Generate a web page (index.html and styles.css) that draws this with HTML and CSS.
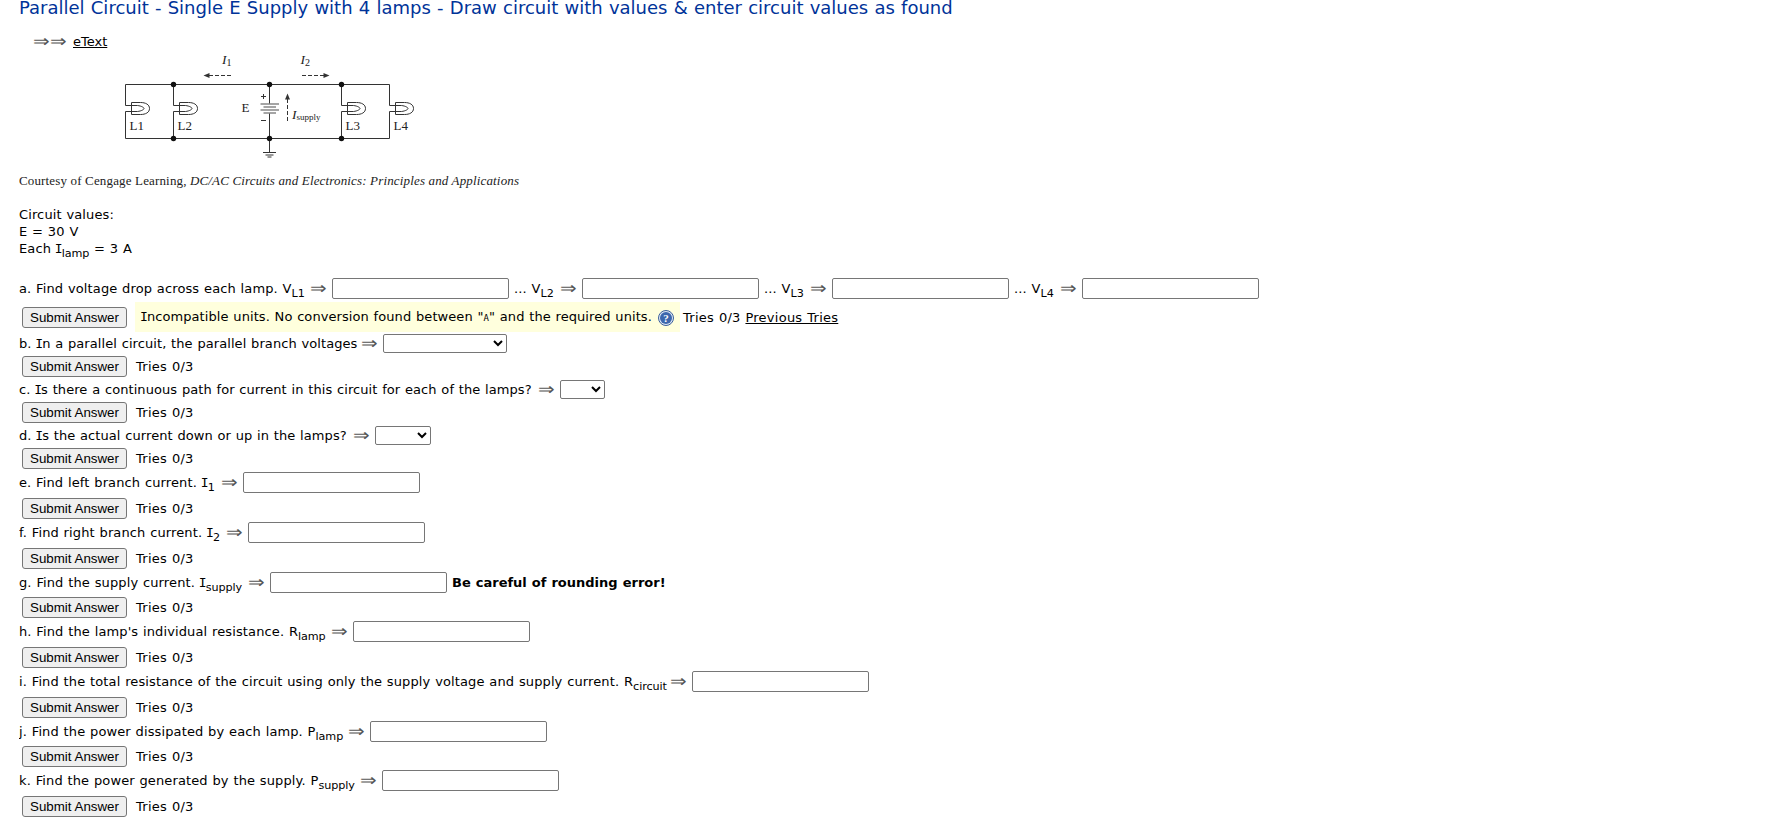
FILE: index.html
```
<!DOCTYPE html>
<html lang="en">
<head>
    <meta charset="UTF-8">
    <meta name="viewport" content="width=device-width, initial-scale=1.0">
    <title>Parallel Circuit</title>
    <link rel="stylesheet" href="styles.css">
</head>
<body>
    <h1>Parallel Circuit - Single E Supply with 4 lamps - Draw circuit with values &amp; enter circuit values as found</h1>
    <p class="etext"><span class="arrow">⇒</span><span class="arrow">⇒</span><a href="#">eText</a></p>

    <svg class="circuit" width="510" height="145" viewBox="19 50 510 145">
        <defs>
            <g id="lamp">
                <path d="M6 -6H15C20 -6 24 -4 24 0S20 6 15 6H6Z"/>
                <path d="M0 -3H12C16 -2.5 18.5 -1 18.5 0S16 2.5 12 3H0"/>
            </g>
        </defs>
        <g class="wire">
            <path d="M125.5 105.5V84.5H389.5V105.5M125.5 111.5V138.5H389.5V111.5"/>
            <path d="M173.5 84.5V105.5M173.5 111.5V138.5M341.5 84.5V105.5M341.5 111.5V138.5"/>
            <path d="M269.5 84.5V104M269.5 113V152.5M263 152.5H276M265.5 155H273.5M267.5 157H271.5"/>
            <use href="#lamp" x="125.5" y="108.5"/>
            <use href="#lamp" x="173.5" y="108.5"/>
            <use href="#lamp" x="341.5" y="108.5"/>
            <use href="#lamp" x="389.5" y="108.5"/>
            <path d="M261 96.5H266M263.5 94V99M261 120.5H266"/>
            <path stroke-dasharray="4 2" d="M231 75.5H209M302 75.5H324M287.5 121V99"/>
        </g>
        <path class="cell" d="M260.5 104H279M263.5 107H276M260.5 110H279M263.5 113H276"/>
        <path class="head" d="M203.5 75.5l6-2.5v5zM329.5 75.5l-6-2.5v5zM287.5 93.5l-2.5 6h5z"/>
        <g class="dot">
            <circle cx="173.5" cy="84.5" r="2.7"/>
            <circle cx="269.5" cy="84.5" r="2.7"/>
            <circle cx="341.5" cy="84.5" r="2.7"/>
            <circle cx="173.5" cy="138.5" r="2.7"/>
            <circle cx="269.5" cy="138.5" r="2.7"/>
            <circle cx="341.5" cy="138.5" r="2.7"/>
        </g>
        <g class="names">
            <text x="129.5" y="130">L1</text>
            <text x="177.5" y="130">L2</text>
            <text x="345.5" y="130">L3</text>
            <text x="393.5" y="130">L4</text>
            <text x="241.5" y="112">E</text>
            <text x="222" y="64"><tspan class="it">I</tspan><tspan class="small" dy="2">1</tspan></text>
            <text x="300.5" y="64"><tspan class="it">I</tspan><tspan class="small" dy="2">2</tspan></text>
            <text x="292" y="119"><tspan class="it">I</tspan><tspan class="tiny" dy="1">supply</tspan></text>
        </g>
        <text class="credit" x="19" y="185" textLength="500">Courtesy of Cengage Learning, <tspan class="it">DC/AC Circuits and Electronics: Principles and Applications</tspan></text>
    </svg>

    <div class="values">
        Circuit values:<br>
        E = 30 V<br>
        Each <span class="cap">I</span><sub>lamp</sub> = 3 A
    </div>

    <form id="circuitForm">
        <div class="question first">
            <label class="w-a"><span>a. Find voltage drop across each lamp. V<sub>L1</sub></span><span class="arrow">⇒</span></label>
            <input type="text">
            <label class="next"><span>... V<sub>L2</sub></span><span class="arrow">⇒</span></label>
            <input type="text">
            <label class="next"><span>... V<sub>L3</sub></span><span class="arrow">⇒</span></label>
            <input type="text">
            <label class="next"><span>... V<sub>L4</sub></span><span class="arrow">⇒</span></label>
            <input type="text">
        </div>
        <div class="answer first">
            <button type="button">Submit Answer</button>
            <div class="warning">
                <span class="message"><span class="cap">I</span>ncompatible units. No conversion found between "<span class="unit">A</span>" and the required units.</span>
                <svg class="help" width="16" height="16" viewBox="0 0 16 16">
                    <circle cx="8" cy="8" r="7.5" fill="#dfe8f5" stroke="#3b5f9b"/>
                    <circle cx="8" cy="8" r="6" fill="#3d67ad"/>
                    <text x="8" y="12" text-anchor="middle">?</text>
                </svg>
            </div>
            <span class="tries">Tries 0/3 <a href="#">Previous Tries</a></span>
        </div>

        <div class="question choice">
            <label class="w-b"><span>b. <span class="cap">I</span>n a parallel circuit, the parallel branch voltages</span><span class="arrow">⇒</span></label>
            <select class="wide"><option></option></select>
        </div>
        <div class="answer"><button type="button">Submit Answer</button><span class="tries">Tries 0/3</span></div>

        <div class="question choice">
            <label class="w-c"><span>c. <span class="cap">I</span>s there a continuous path for current in this circuit for each of the lamps?</span><span class="arrow">⇒</span></label>
            <select class="yesno"><option></option></select>
        </div>
        <div class="answer"><button type="button">Submit Answer</button><span class="tries">Tries 0/3</span></div>

        <div class="question choice">
            <label class="w-d"><span>d. <span class="cap">I</span>s the actual current down or up in the lamps?</span><span class="arrow">⇒</span></label>
            <select class="updown"><option></option></select>
        </div>
        <div class="answer"><button type="button">Submit Answer</button><span class="tries">Tries 0/3</span></div>

        <div class="question">
            <label class="w-e"><span>e. Find left branch current. <span class="cap">I</span><sub>1</sub></span><span class="arrow">⇒</span></label>
            <input type="text">
        </div>
        <div class="answer"><button type="button">Submit Answer</button><span class="tries">Tries 0/3</span></div>

        <div class="question">
            <label class="w-f"><span>f. Find right branch current. <span class="cap">I</span><sub>2</sub></span><span class="arrow">⇒</span></label>
            <input type="text">
        </div>
        <div class="answer"><button type="button">Submit Answer</button><span class="tries">Tries 0/3</span></div>

        <div class="question">
            <label class="w-g"><span>g. Find the supply current. <span class="cap">I</span><sub>supply</sub></span><span class="arrow">⇒</span></label>
            <input type="text">
            <b>Be careful of rounding error!</b>
        </div>
        <div class="answer"><button type="button">Submit Answer</button><span class="tries">Tries 0/3</span></div>

        <div class="question">
            <label class="w-h"><span>h. Find the lamp's individual resistance. R<sub>lamp</sub></span><span class="arrow">⇒</span></label>
            <input type="text">
        </div>
        <div class="answer"><button type="button">Submit Answer</button><span class="tries">Tries 0/3</span></div>

        <div class="question">
            <label class="w-i"><span>i. Find the total resistance of the circuit using only the supply voltage and supply current. R<sub>circuit</sub></span><span class="arrow">⇒</span></label>
            <input type="text">
        </div>
        <div class="answer"><button type="button">Submit Answer</button><span class="tries">Tries 0/3</span></div>

        <div class="question">
            <label class="w-j"><span>j. Find the power dissipated by each lamp. P<sub>lamp</sub></span><span class="arrow">⇒</span></label>
            <input type="text">
        </div>
        <div class="answer"><button type="button">Submit Answer</button><span class="tries">Tries 0/3</span></div>

        <div class="question">
            <label class="w-k"><span>k. Find the power generated by the supply. P<sub>supply</sub></span><span class="arrow">⇒</span></label>
            <input type="text">
        </div>
        <div class="answer"><button type="button">Submit Answer</button><span class="tries">Tries 0/3</span></div>
    </form>
</body>
</html>
```
FILE: styles.css
```
body{
    margin: 0 0 0 19px;
    background: #fff;
    color: #000;
    font-family: Verdana, "DejaVu Sans", sans-serif;
    font-size: 13px;
    line-height: 17px;
    letter-spacing: 0.12px;
    word-spacing: 0.5px;
    overflow: hidden;
}

h1{
    margin: 0;
    height: 33px;
    font-size: 18px;
    font-weight: normal;
    line-height: 16px;
    letter-spacing: 0;
    color: #003399;
    white-space: nowrap;
}

a{
    color: #000;
}

.etext{
    display: flex;
    margin: 0 0 0 14px;
    height: 17px;
}
.etext a{
    margin-left: 6px;
    letter-spacing: 0;
}

.arrow{
    flex: none;
    width: 17px;
    font-family: "Liberation Serif", serif;
    font-size: 17px;
    letter-spacing: 0;
    color: #555;
    transform: scaleX(1.17);
    transform-origin: left;
}

/* capital I with serifs */
.cap{
    font-family: "DejaVu Sans Mono", monospace;
    margin: 0 -1px;
}
sub{
    font-size: 11.2px;
    line-height: 0;
    letter-spacing: -0.1px;
}

/* circuit drawing */
.circuit{
    display: block;
    font-family: "Liberation Serif", serif;
    letter-spacing: 0;
    word-spacing: 0;
}
.wire{
    fill: none;
    stroke: #333;
    stroke-width: 1;
}
.cell{
    fill: none;
    stroke: #888;
    stroke-width: 1.5;
}
.head{
    fill: #333;
}
.dot{
    fill: #111;
}
.names{
    font-size: 13px;
    fill: #222;
}
.it{
    font-style: italic;
}
.names .it{
    font-size: 13.5px;
}
.small{
    font-size: 10px;
}
.tiny{
    font-size: 9px;
}
.credit{
    font-size: 13px;
    fill: #222;
}

.values{
    margin-top: 11px;
    height: 72.2px;
}

/* questions */
.question{
    display: flex;
    height: 25.7px;
    white-space: nowrap;
}
.question.first{
    height: 29px;
}
.question.choice{
    height: 22px;
}
label{
    display: flex;
    box-sizing: border-box;
    padding: 2px 5px 0 0;
    height: 21px;
}
.choice label{
    padding-top: 1px;
    letter-spacing: 0.08px;
}
label .arrow{
    margin-left: auto;
}
.next{
    width: 73px;
    padding-left: 5px;
}
.w-a{width: 313px;}
.w-b{width: 364px;}
.w-c{width: 541px;}
.w-d{width: 356px;}
.w-e{width: 224px;}
.w-f{width: 229px;}
.w-g{width: 251px;}
.w-h{width: 334px;}
.w-i{width: 673px;}
.w-j{width: 351px;}
.w-k{width: 363px;}

input{
    box-sizing: border-box;
    width: 177px;
    height: 21px;
    margin: 0;
    border: 1px solid #767676;
    border-radius: 2px;
}
select{
    box-sizing: border-box;
    height: 19px;
    margin: 0;
    border: 1px solid #767676;
    border-radius: 2px;
    background-color: #fff;
}
.wide{width: 124px;}
.yesno{width: 45px;}
.updown{width: 56px;}
b{
    margin: 2px 0 0 5px;
    letter-spacing: 0;
}

.answer{
    display: flex;
    height: 24px;
    white-space: nowrap;
}
.answer.first{
    height: 27px;
}
button{
    box-sizing: border-box;
    width: 105px;
    height: 21px;
    margin: 0 0 0 3px;
    padding: 0;
    border: 1px solid #767676;
    border-radius: 3px;
    background: #efefef;
    font-family: Arial, "Liberation Sans", sans-serif;
    font-size: 13.333px;
    color: #000;
}
.tries{
    margin: 2px 0 0 9px;
    letter-spacing: 0.25px;
}
.warning{
    display: flex;
    box-sizing: border-box;
    width: 545px;
    height: 30px;
    margin: -5px -6px 0 8px;
    padding: 6px 6px 0 6px;
    background: #ffffdd;
    letter-spacing: 0.08px;
}
.unit{
    font-family: "DejaVu Sans Mono", monospace;
    font-size: 9px;
}
.help{
    margin: 2px 0 0 auto;
}
.help text{
    font: bold 11px "Liberation Serif", serif;
    fill: #fff;
}
```
